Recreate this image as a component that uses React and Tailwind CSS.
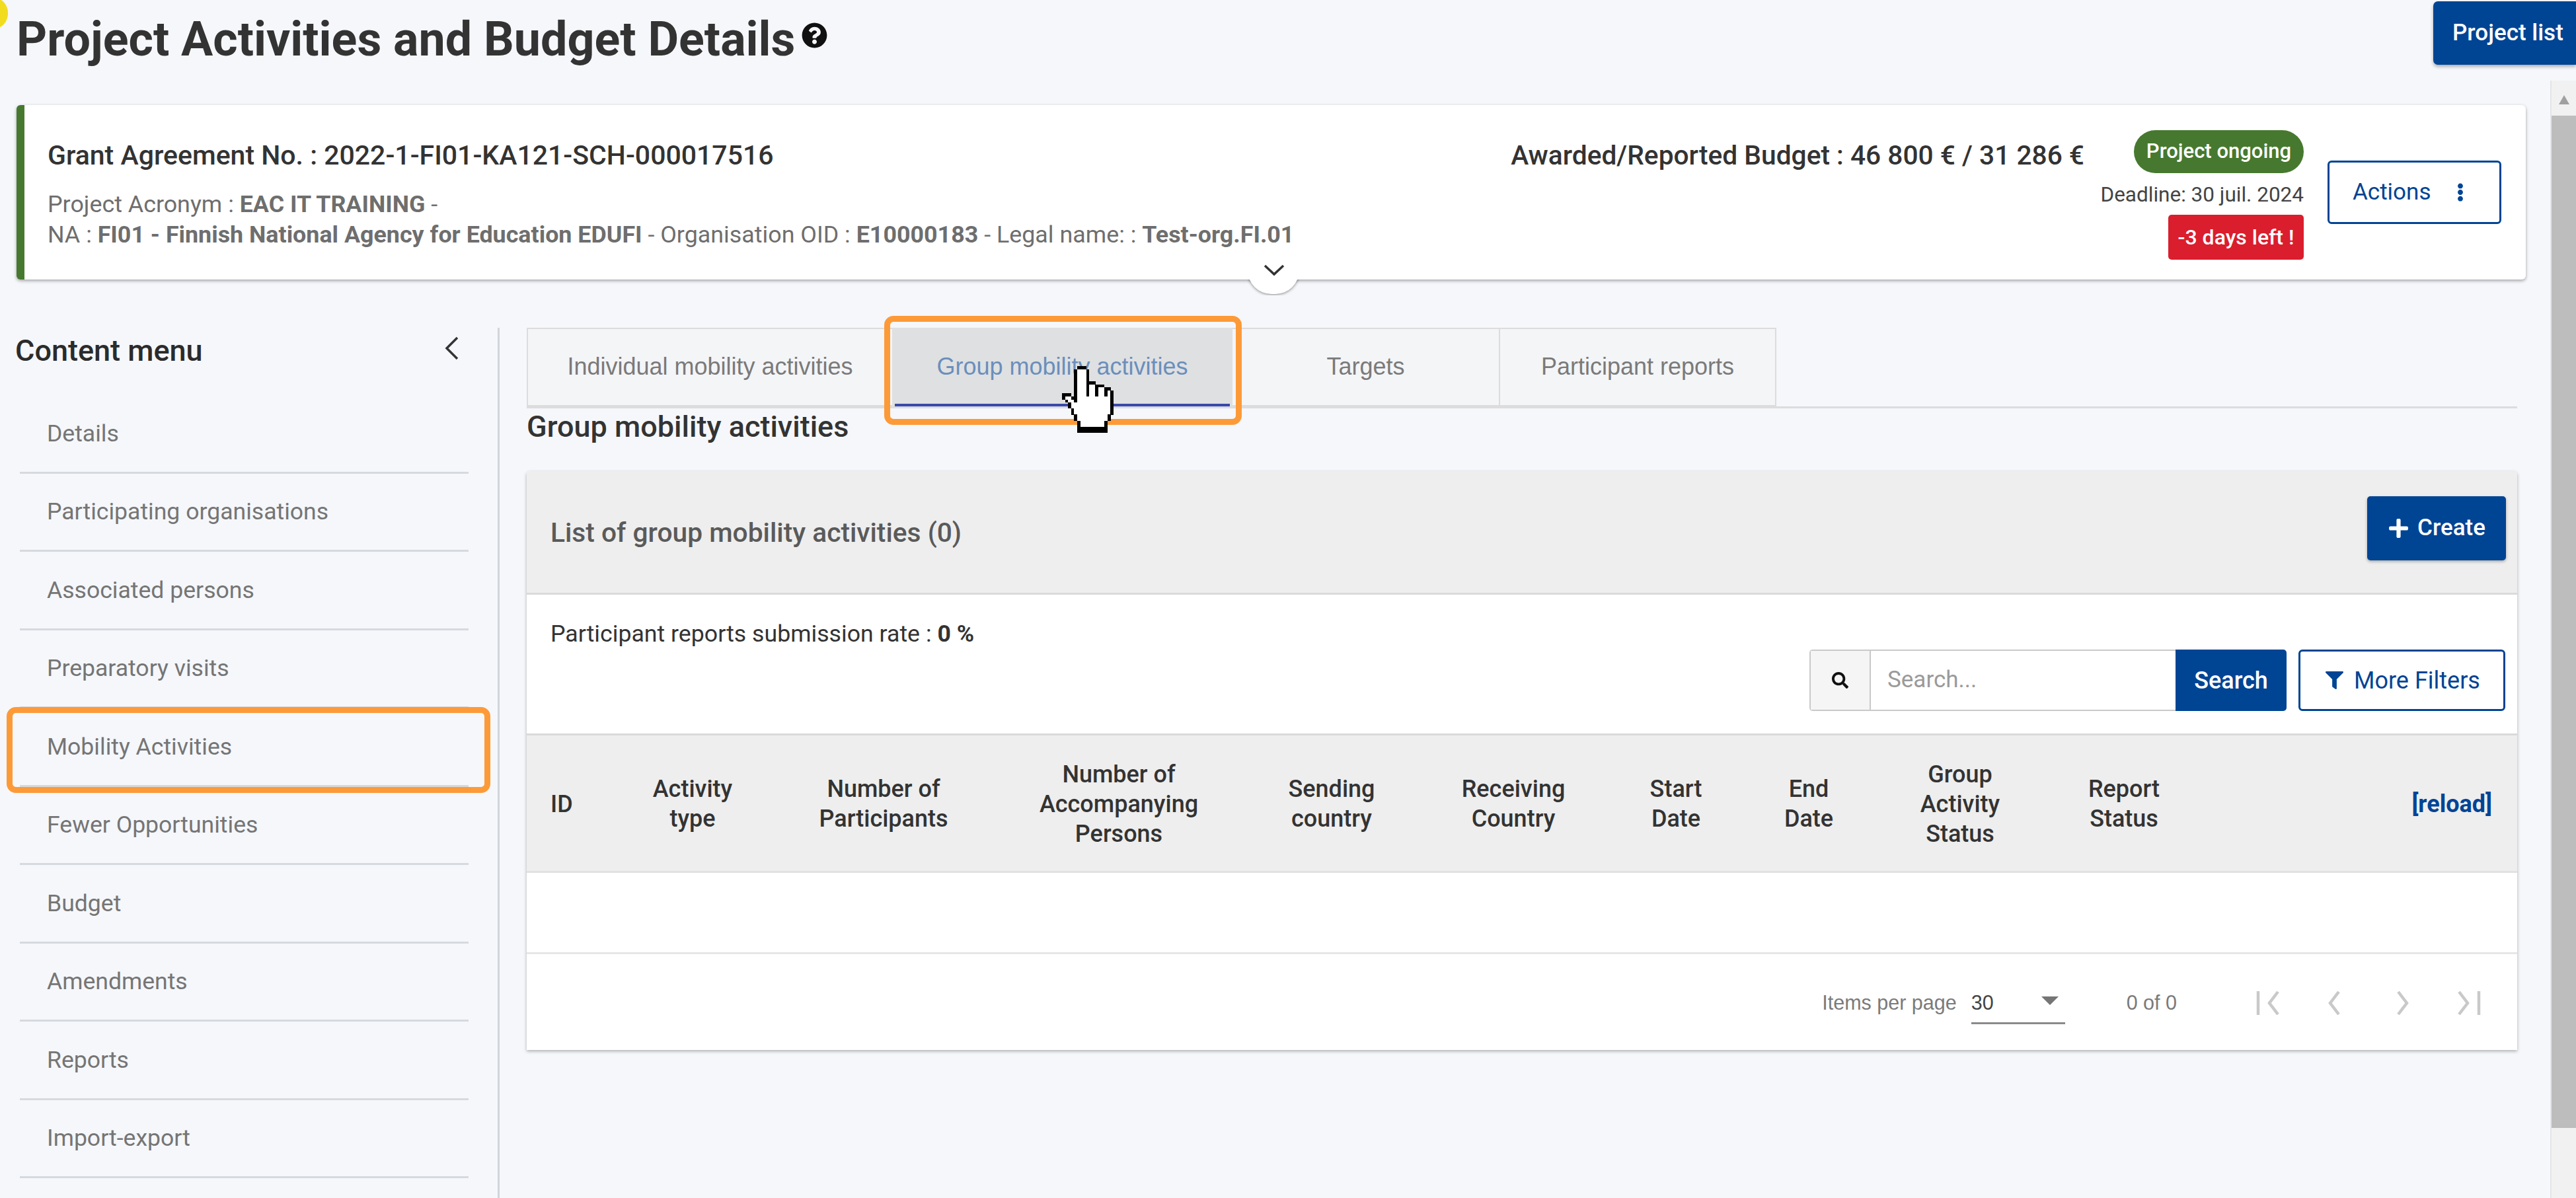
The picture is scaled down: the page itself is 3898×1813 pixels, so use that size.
import React from "react";
import { FaQuestionCircle, FaEllipsisV, FaPlus, FaSearch, FaFilter } from "react-icons/fa";

const HAND = [
  ".....kkk.........",
  "....kwwwk........",
  "....kwwwk........",
  "....kwwwk........",
  "....kwwwk........",
  "....kwwwkkk......",
  "....kwwwkwwkkk...",
  "....kwwwkwwkwwkk.",
  "....kwwwkwwkwwkwk",
  "kkk.kwwwkwwkwwkwk",
  "kwwkkwwwwwwwwwwwk",
  ".kwwkwwwwwwwwwwwk",
  "..kwwwwwwwwwwwwwk",
  "..kwwwwwwwwwwwwwk",
  "...kwwwwwwwwwwwwk",
  "...kwwwwwwwwwwwwk",
  "....kwwwwwwwwwwk.",
  "....kwwwwwwwwwwk.",
  ".....kwwwwwwwwk..",
  ".....kwwwwwwwwk..",
  ".....kkkkkkkkkk..",
  ".....kkkkkkkkkk..",
];

function HandCursor() {
  return (
    <svg viewBox="0 0 17 22" shapeRendering="crispEdges" className="absolute left-[1607px] top-[553px] h-[103px] w-[78px]">
      {HAND.flatMap((row, y) =>
        row.split("").map((c, x) =>
          c === "." ? null : <rect key={`${x}-${y}`} x={x} y={y} width="1.02" height="1.02" fill={c === "k" ? "#000" : "#fff"} />
        )
      )}
    </svg>
  );
}

const MENU = ["Details", "Participating organisations", "Associated persons", "Preparatory visits", "Mobility Activities", "Fewer Opportunities", "Budget", "Amendments", "Reports", "Import-export"];

const COLS = [
  { w: "w-[133px]", a: "pl-[36px] text-left", t: ["ID"] },
  { w: "w-[236px]", a: "text-center", t: ["Activity", "type"] },
  { w: "w-[342px]", a: "text-center", t: ["Number of", "Participants"] },
  { w: "w-[370px]", a: "text-center", t: ["Number of", "Accompanying", "Persons"] },
  { w: "w-[274px]", a: "text-center", t: ["Sending", "country"] },
  { w: "w-[276px]", a: "text-center", t: ["Receiving", "Country"] },
  { w: "w-[216px]", a: "text-center", t: ["Start", "Date"] },
  { w: "w-[186px]", a: "text-center", t: ["End", "Date"] },
  { w: "w-[272px]", a: "text-center", t: ["Group", "Activity", "Status"] },
  { w: "w-[224px]", a: "text-center", t: ["Report", "Status"] },
];

function Pager({ d }) {
  return (
    <svg viewBox="0 0 36 36" className="h-[36px] w-[36px]" fill="none" stroke="#c9c9c9" strokeWidth="4.5">
      <path d={d} />
    </svg>
  );
}

export default function App() {
  return (
    <div className="relative flex h-[1813px] w-[3898px] flex-col overflow-hidden bg-[#f5f7fb] font-[Roboto,sans-serif] text-[#333333]">
      <div className="absolute -left-[34px] -top-[4px] h-[48px] w-[46px] rounded-full bg-[#f2dc1f]" />

      <header className="flex h-[122px] shrink-0 items-start justify-between pl-[25px]">
        <h1 className="mt-[22px] flex items-center text-[71.8px] leading-[76px] font-bold text-[#333333]">
          Project Activities and Budget Details
          <FaQuestionCircle className="mb-[14px] ml-[10px] h-[39px] w-[39px] text-[#111111]" />
        </h1>
        <button className="mt-[2px] h-[96px] w-[216px] rounded-l-[7px] bg-[#004494] pl-[29px] text-left text-[35px] font-medium whitespace-nowrap text-white shadow-[0_3px_5px_rgba(0,0,0,0.3)]">
          Project list
        </button>
      </header>

      <div className="flex min-h-0 flex-1">
        <div className="min-w-0 flex-1">
          <section className="relative ml-[25px] mr-[37px] mt-[37px] flex h-[264px] rounded-[6px] border-l-[12px] border-[#46792f] bg-white pl-[35px] pr-[37px] shadow-[0_2px_5px_rgba(0,0,0,0.35)]">
            <div className="flex-1 pt-[52px]">
              <div className="text-[41px] leading-[48px] font-medium text-[#333333]">Grant Agreement No. : 2022-1-FI01-KA121-SCH-000017516</div>
              <div className="mt-[27px] text-[35.85px] leading-[46px] text-[#6e6e6e]">
                <div>Project Acronym : <b className="font-bold">EAC IT TRAINING</b> -</div>
                <div>NA : <b className="font-bold">FI01 - Finnish National Agency for Education EDUFI</b> - Organisation OID : <b className="font-bold">E10000183</b> - Legal name: : <b className="font-bold">Test-org.FI.01</b></div>
              </div>
            </div>
            <div className="pt-[52px] text-[40.7px] leading-[48px] font-medium whitespace-nowrap text-[#333333]">Awarded/Reported Budget : 46 800 € / 31 286 €</div>
            <div className="ml-[27px] flex w-[305px] flex-col items-end pt-[38px]">
              <div className="flex h-[65px] w-[257px] items-center justify-center rounded-full bg-[#46792f] text-[31px] font-medium whitespace-nowrap text-white">Project ongoing</div>
              <div className="mt-[13px] text-[31.5px] leading-[40px] whitespace-nowrap text-[#444444]">Deadline: 30 juil. 2024</div>
              <div className="mt-[10px] flex h-[68px] w-[205px] items-center justify-center rounded-[5px] bg-[#da1e2d] text-[32px] font-medium whitespace-nowrap text-white">-3 days left !</div>
            </div>
            <div className="ml-[36px] mt-[84px] flex h-[96px] w-[263px] items-center rounded-[6px] border-[3px] border-[#004494] pl-[35px] text-[35px] text-[#004494]">
              Actions
              <FaEllipsisV className="ml-[37px] h-[28px] w-[16px]" />
            </div>
            <div className="absolute left-[1850px] top-[264px] flex h-[24px] w-[80px] justify-center overflow-hidden">
              <div className="-mt-[50px] h-[72px] w-[78px] rounded-full bg-white shadow-[0_1px_4px_rgba(0,0,0,0.45)]" />
            </div>
            <svg viewBox="0 0 32 18" className="absolute left-[1875px] top-[241px] h-[18px] w-[32px]" fill="none" stroke="#333333" strokeWidth="3.5">
              <path d="M2 2 L16 15 L30 2" />
            </svg>
          </section>

          <div className="mt-[73px] flex">
            <aside className="h-[1317px] w-[756px] shrink-0 border-r-[3px] border-[#d2d5da]">
              <div className="flex h-[102px] items-start justify-between pl-[23px] pr-[58px]">
                <div className="mt-[10px] text-[45px] leading-[50px] font-medium text-[#2b2b2b]">Content menu</div>
                <svg viewBox="0 0 22 36" className="mt-[13px] h-[36px] w-[22px]" fill="none" stroke="#333333" strokeWidth="3.5">
                  <path d="M19 2 L3 18 L19 34" />
                </svg>
              </div>
              <nav className="ml-[30px] w-[679px]">
                {MENU.map((m) => (
                  <div key={m} className="flex h-[118.5px] items-center border-b-[3px] border-[#d6d9de] pl-[41px] pt-[1px] text-[35.6px] text-[#757575]">{m}</div>
                ))}
              </nav>
            </aside>

            <main className="min-w-0 flex-1 pl-[41px] pr-[50px]">
              <div className="flex h-[122px] border-b-[3px] border-[#dcdcdc] font-['Liberation_Sans',sans-serif] text-[36px] text-[#7a7a7a]">
                <div className="flex w-[553px] items-center justify-center border-y-[2px] border-l-[2px] border-[#dcdcdc] bg-[#f4f5f7] pb-[2px]">Individual mobility activities</div>
                <div className="relative flex w-[515px] items-center justify-center bg-[#dfe0e2] pb-[2px] text-[#6a8fbb]">
                  Group mobility activities
                  <span className="absolute bottom-0 left-[4px] right-[4px] h-[4px] bg-[#3949ab]" />
                </div>
                <div className="flex w-[405px] items-center justify-center border-y-[2px] border-r-[2px] border-[#dcdcdc] bg-[#f4f5f7] pb-[2px]">Targets</div>
                <div className="flex w-[418px] items-center justify-center border-y-[2px] border-r-[2px] border-[#dcdcdc] bg-[#f4f5f7] pb-[2px]">Participant reports</div>
              </div>
              <h2 className="flex h-[95px] items-start pt-[4px] text-[45px] leading-[48px] font-medium text-[#333333]">Group mobility activities</h2>

              <div className="overflow-hidden rounded-t-[5px] bg-white shadow-[0_2px_5px_rgba(0,0,0,0.3)]">
                <div className="flex h-[187px] items-center justify-between border-b-[3px] border-[#dadada] bg-[#eeeeee] pl-[36px] pr-[17px]">
                  <div className="pt-[4px] text-[40.7px] font-medium text-[#5a5a5a]">List of group mobility activities (0)</div>
                  <button className="mb-[12px] flex h-[97px] w-[210px] items-center justify-center rounded-[5px] bg-[#004494] text-[35px] font-medium text-white shadow-[0_2px_4px_rgba(0,0,0,0.3)]">
                    <FaPlus className="mr-[12px] h-[33px] w-[33px]" />
                    Create
                  </button>
                </div>

                <div className="h-[213px] border-b-[3px] border-[#dadada] pl-[36px] pr-[18px] pt-[41px]">
                  <div className="text-[35.7px] leading-[36px] text-[#333333]">Participant reports submission rate : <b className="font-bold">0 %</b></div>
                  <div className="mt-[6px] flex justify-end gap-[18px]">
                    <div className="flex h-[93px] w-[722px] overflow-hidden rounded-[5px]">
                      <div className="flex w-[91px] items-center justify-center border-y-[2px] border-l-[2px] border-[#c9c9c9] bg-[#f5f5f5]">
                        <FaSearch className="h-[25px] w-[25px] text-[#111111]" />
                      </div>
                      <div className="flex flex-1 items-center border-[2px] border-r-0 border-[#c9c9c9] bg-white pl-[25px] text-[35px] text-[#9a9a9a]">Search...</div>
                      <div className="flex w-[168px] items-center justify-center bg-[#004494] text-[36px] font-medium text-white">Search</div>
                    </div>
                    <div className="flex h-[93px] w-[313px] items-center justify-center rounded-[6px] border-[3px] border-[#004494] pl-[3px] text-[36px] text-[#004494]">
                      <FaFilter className="mr-[16px] h-[27px] w-[27px]" />
                      More Filters
                    </div>
                  </div>
                </div>

                <div className="flex h-[208px] items-center border-b-[3px] border-[#e2e2e2] bg-[#eeeeee] pt-[3px] text-[36px] leading-[45px] font-medium text-[#333333]">
                  {COLS.map((c) => (
                    <div key={c.t.join()} className={`${c.w} ${c.a} shrink-0`}>
                      {c.t.map((l) => (<div key={l}>{l}</div>))}
                    </div>
                  ))}
                  <div className="flex-1 pr-[38px] text-right font-bold text-[#004494]">[reload]</div>
                </div>

                <div className="h-[123px] border-b-[3px] border-[#e6e6e6]" />

                <div className="flex h-[145px] items-center justify-end pr-[54px] pt-[3px] font-['Liberation_Sans',sans-serif] text-[30.5px] text-[#7a7a7a]">
                  <span>Items per page</span>
                  <div className="relative ml-[22px] flex h-[64px] w-[142px] items-center border-b-[3px] border-[#8a8a8a] pt-[2px] text-[#444444]">
                    30
                    <span className="absolute left-[106px] top-[22px] h-0 w-0 border-x-[13px] border-t-[13px] border-x-transparent border-t-[#757575]" />
                  </div>
                  <span className="ml-[93px]">0 of 0</span>
                  <div className="ml-[119px] flex gap-[66px]">
                    <Pager d="M4 0 V36 M34 1 L21 18 L34 35" />
                    <Pager d="M24 1 L11 18 L24 35" />
                    <Pager d="M12 1 L25 18 L12 35" />
                    <Pager d="M32 0 V36 M2 1 L15 18 L2 35" />
                  </div>
                </div>
              </div>
            </main>
          </div>
        </div>

        <div className="flex w-[39px] shrink-0 flex-col border-l-[2px] border-[#e4e5e8] bg-[#f1f1f1]">
          <div className="flex h-[53px] justify-center pt-[22px]">
            <span className="h-0 w-0 border-x-[8px] border-b-[14px] border-x-transparent border-b-[#a0a0a0]" />
          </div>
          <div className="h-[1532px] bg-[#bdbdbd]" />
        </div>
      </div>

      <div className="absolute left-[10px] top-[1070px] h-[130px] w-[732px] rounded-[14px] border-[9px] border-[#fd9a38]" />
      <div className="absolute left-[1338px] top-[478px] h-[165px] w-[541px] rounded-[14px] border-[9px] border-[#fd9a38]" />
      <HandCursor />
    </div>
  );
}
